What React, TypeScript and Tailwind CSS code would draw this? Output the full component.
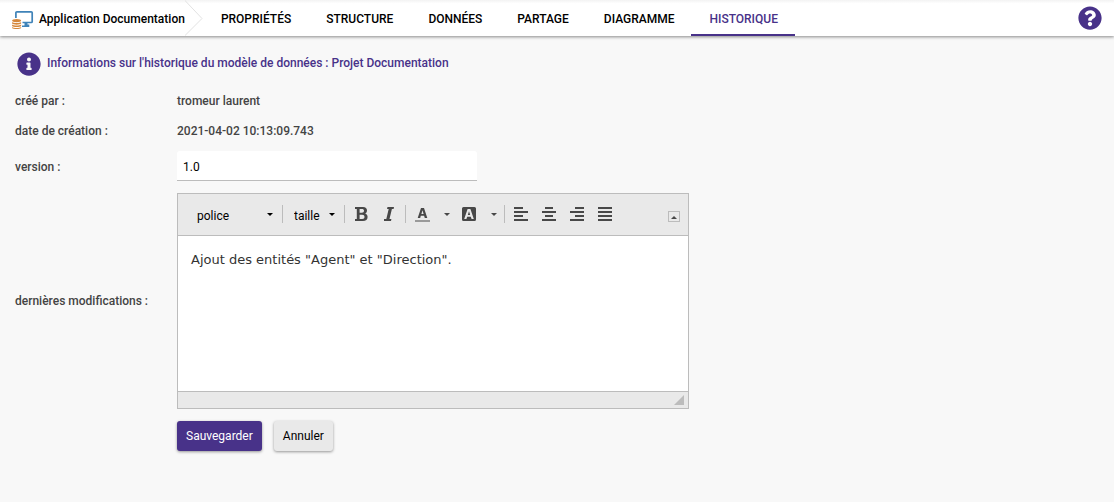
import { useState } from "react";
import { FaInfoCircle, FaQuestionCircle } from "react-icons/fa";

const tabs = ["PROPRIÉTÉS", "STRUCTURE", "DONNÉES", "PARTAGE", "DIAGRAMME", "HISTORIQUE"];

function Logo() {
  return (
    <svg viewBox="0 0 22 20" className="mt-1 h-5 w-[22px] shrink-0">
      <path d="M3.900 8V2.800a1 1 0 0 1 1-1h14.300a1 1 0 0 1 1 1v8.700a1 1 0 0 1-1 1H10.500" fill="none" stroke="#3f83b8" strokeWidth="1.700" />
      <path d="M12.500 12.500h3v2h1.800V17H10v-1.600h2.500z" fill="#3f83b8" />
      <g fill="#d5873b">
        <ellipse cx="4.600" cy="10.600" rx="4.500" ry="1.600" />
        <path d="M.1 12c1.500 1.300 7.500 1.300 9 0v1.500c-1 1.500-8 1.500-9 0z" />
        <path d="M.1 14.600c1.500 1.300 7.500 1.300 9 0v1.300c-1 1.500-8 1.500-9 0z" />
        <path d="M.1 17c1.500 1.300 7.500 1.300 9 0v.9c-1 1.500-8 1.500-9 0z" />
      </g>
    </svg>
  );
}

function Nav() {
  const [active, setActive] = useState("HISTORIQUE");
  return (
    <header className="flex h-9 items-center bg-gradient-to-b from-[#f3f3f3] to-white to-10% px-3 shadow-[0_1px_3px_rgba(0,0,0,0.45)]">
      <Logo />
      <a href="#" className="ml-[5px] pt-[2px] whitespace-nowrap text-black">Application Documentation</a>
      <svg viewBox="0 0 18 36" className="h-9 w-[18px] shrink-0" fill="none" stroke="#e2e2e2">
        <path d="M-.5 0l17.500 18.500L-.5 36" />
      </svg>
      <nav className="flex h-full">
        {tabs.map((t) => (
          <a
            key={t}
            href="#"
            onClick={() => setActive(t)}
            className={
              t === active
                ? "flex items-center border-b-2 border-[#483289] pt-1 pr-[17px] pl-[18px] text-[#483289]"
                : "flex items-center border-b-2 border-transparent pt-1 pr-[17px] pl-[18px] text-black"
            }
          >
            {t}
          </a>
        ))}
      </nav>
      <button aria-label="Aide" className="ml-auto text-[#483289]">
        <FaQuestionCircle size={24} />
      </button>
    </header>
  );
}

function Caret() {
  return (
    <svg viewBox="0 0 6 3" className="h-[3px] w-[6px] shrink-0 fill-current">
      <path d="M0 0h6L3 3z" />
    </svg>
  );
}

function Separator() {
  return <span className="h-[18px] w-px shrink-0 bg-[#bcbcbc]" />;
}

const aligns = [
  { label: "Aligner à gauche", path: "M0 1h9M0 5h14M0 9h9M0 13h14" },
  { label: "Centrer", path: "M3 1h8M0 5h14M3 9h8M0 13h14" },
  { label: "Aligner à droite", path: "M5 1h9M0 5h14M5 9h9M0 13h14" },
  { label: "Justifier", path: "M0 1h14M0 5h14M0 9h14M0 13h14" },
];

function Toolbar() {
  return (
    <div className="flex h-[42px] items-center border-b border-[#bcbcbc] bg-[#e9e9e9] pr-2 pb-px pl-[19px] text-[#484848]">
      <label className="flex items-center text-black">
        <select aria-label="police" className="w-[70px] appearance-none pt-1 font-normal">
          <option>police</option>
        </select>
        <Caret />
      </label>
      <span className="w-[9px]" />
      <Separator />
      <label className="ml-[11px] flex items-center text-black">
        <select aria-label="taille" className="w-[35px] appearance-none pt-1 font-normal">
          <option>taille</option>
        </select>
        <Caret />
      </label>
      <span className="w-[9px]" />
      <Separator />
      <div className="flex gap-4 pr-[9px] pl-[10px]">
        <button aria-label="Gras">
          <svg viewBox="0 0 13 14" className="h-[14px] w-[13px]" fill="currentColor" fillRule="evenodd">
            <path d="M0 0h8c2.700 0 4 1.500 4 3.500 0 1.600-.8 2.600-2 3.100 1.600.4 2.600 1.600 2.600 3.500 0 2.500-1.800 3.900-4.600 3.900H0v-2h1.800V2H0zM4.600 2v3.700h2.200c1.500 0 2.200-.6 2.200-1.900S8.300 2 6.800 2zM4.600 7.700V12h2.600c1.600 0 2.300-.8 2.300-2.200s-.8-2.100-2.300-2.100z" />
          </svg>
        </button>
        <button aria-label="Italique">
          <svg viewBox="0 0 12 14" className="h-[14px] w-3" fill="currentColor">
            <path d="M3.500 0H10l-.4 2H7.900L5.500 12h1.900l-.4 2H-.5l.5-2h2.300L4.700 2H3z" />
          </svg>
        </button>
      </div>
      <Separator />
      <button aria-label="Couleur du texte" className="ml-[9px] flex items-center gap-[14px]">
        <svg viewBox="0 0 15 16" className="h-4 w-[15px]" fill="currentColor" fillRule="evenodd">
          <path d="M6 2h3l3.300 10H9.800l-.7-2.200H5.800L5.200 12H2.700zM7.500 4.200L6.400 8h2.200z" />
          <path d="M0 14h15v2H0z" fill="#9a9a9a" />
        </svg>
        <Caret />
      </button>
      <button aria-label="Couleur d'arrière-plan" className="ml-3 flex items-center gap-[15px]">
        <svg viewBox="0 0 14 14" className="h-[14px] w-[14px]" fill="currentColor" fillRule="evenodd">
          <path d="M1.500 0h11A1.500 1.500 0 0 1 14 1.500v11a1.500 1.500 0 0 1-1.500 1.500h-11A1.500 1.500 0 0 1 0 12.500v-11A1.500 1.500 0 0 1 1.500 0zM5.600 2L2.200 12h2.200l.8-2.300h3.600l.8 2.300h2.200L8.400 2zM7 4.300l1.200 3.800H5.800z" />
        </svg>
        <Caret />
      </button>
      <span className="w-[7px]" />
      <Separator />
      <div className="ml-[9px] flex gap-[14px]">
        {aligns.map((a) => (
          <button key={a.label} aria-label={a.label}>
            <svg viewBox="0 0 14 14" className="h-[14px] w-[14px]" fill="none" stroke="currentColor" strokeWidth="2">
              <path d={a.path} />
            </svg>
          </button>
        ))}
      </div>
      <button aria-label="Réduire la barre d'outils" className="mt-[5px] ml-auto flex h-[11px] w-3 items-end justify-center border border-[#bcbcbc] pb-[2px]">
        <svg viewBox="0 0 6 3" className="h-[3px] w-[6px]" fill="currentColor">
          <path d="M0 3h6L3 0z" />
        </svg>
      </button>
    </div>
  );
}

function Editor() {
  return (
    <div className="w-full max-w-[512px] border border-[#bcbcbc] bg-white">
      <Toolbar />
      <textarea
        id="modifications"
        className="block h-[155px] w-full resize-none px-[13px] py-[13px] font-['DejaVu_Sans',sans-serif] text-[13px] leading-[21px] font-normal text-[#333] outline-none"
        defaultValue={'Ajout des entités "Agent" et "Direction".'}
      />
      <div className="flex h-[17px] items-center justify-end border-t border-[#bcbcbc] bg-[#e9e9e9] pr-1">
        <svg viewBox="0 0 10 10" className="h-[10px] w-[10px] fill-[#bcbcbc]">
          <path d="M10 0v10H0z" />
        </svg>
      </div>
    </div>
  );
}

export default function App() {
  return (
    <div className="min-h-screen bg-[#f8f8f8] font-[Roboto,sans-serif] text-[12px] leading-[18px] font-medium text-[#444]">
      <Nav />
      <main className="px-[15px] pt-[13px]">
        <h1 className="flex items-center gap-[6px] pl-[2px] text-[#483289]">
          <FaInfoCircle size={24} className="mt-[3px] shrink-0" />
          Informations sur l'historique du modèle de données : Projet Documentation
        </h1>
        <form className="mt-[10px]" onSubmit={(e) => e.preventDefault()}>
          <dl className="grid grid-cols-[162px_1fr]">
            <dt className="py-[6px]">créé par :</dt>
            <dd className="py-[6px]">tromeur laurent</dd>
            <dt className="py-[6px]">date de création :</dt>
            <dd className="py-[6px]">2021-04-02 10:13:09.743</dd>
          </dl>
          <div className="mt-[5px] grid grid-cols-[162px_1fr] items-center gap-y-3">
            <label htmlFor="version" className="pt-[2px]">version :</label>
            <input
              id="version"
              defaultValue="1.0"
              className="h-[30px] w-full max-w-[300px] rounded-t-[3px] border-b border-[#bcbcbc] bg-white px-[6px] pt-[2px] font-normal text-black outline-none"
            />
            <label htmlFor="modifications">dernières modifications :</label>
            <Editor />
            <div className="col-start-2 flex gap-3">
              <button type="submit" className="h-[30px] rounded-[3px] bg-[#483289] px-[9px] font-normal text-white shadow-[0_1px_3px_rgba(0,0,0,0.4)]">
                Sauvegarder
              </button>
              <button type="button" className="h-[30px] rounded-[3px] bg-[#e9e9e9] px-[9px] font-normal text-black shadow-[0_1px_3px_rgba(0,0,0,0.4)]">
                Annuler
              </button>
            </div>
          </div>
        </form>
      </main>
    </div>
  );
}
